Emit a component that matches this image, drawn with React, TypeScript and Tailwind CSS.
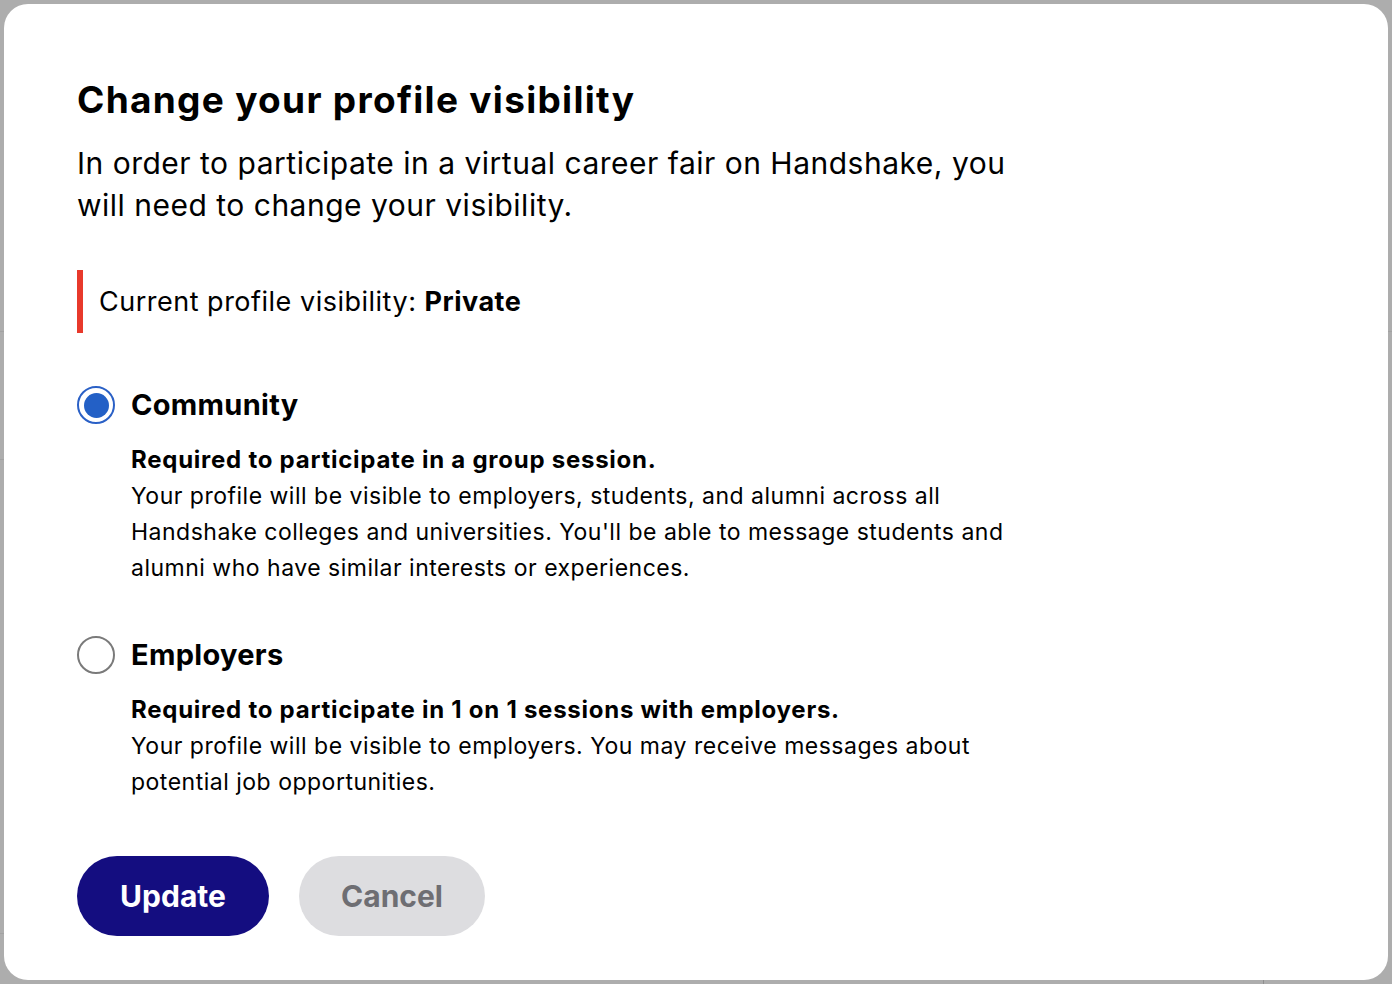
import React, { useState } from "react";

type Option = {
  readonly id: "community" | "employers";
  readonly label: string;
  readonly requirement: string;
  readonly description: string;
};

const OPTIONS: Option[] = [
  {
    id: "community",
    label: "Community",
    requirement: "Required to participate in a group session.",
    description:
      "Your profile will be visible to employers, students, and alumni across all Handshake colleges and universities. You'll be able to message students and alumni who have similar interests or experiences.",
  },
  {
    id: "employers",
    label: "Employers",
    requirement: "Required to participate in 1 on 1 sessions with employers.",
    description:
      "Your profile will be visible to employers. You may receive messages about potential job opportunities.",
  },
];

function Radio({ checked }: { readonly checked: boolean }) {
  return (
    <span
      className={
        checked
          ? "flex size-[38px] shrink-0 items-center justify-center rounded-full border-[2.5px] border-[#2a60c6]"
          : "flex size-[38px] shrink-0 items-center justify-center rounded-full border-2 border-[#7a7a7a]"
      }
    >
      {checked ? <span className="size-[25px] rounded-full bg-[#2360c6]" /> : null}
    </span>
  );
}

export default function App() {
  const [selected, setSelected] = useState<Option["id"]>("community");

  return (
    <div
      className="relative h-[984px] w-full overflow-hidden bg-[#adadad] p-1 text-black"
      style={{ fontFamily: "Inter, 'Noto Sans', sans-serif" }}
    >
      {/* page behind the backdrop */}
      <div className="absolute inset-x-0 top-[331px] h-px bg-[#a2a2a2]" />
      <div className="absolute left-0 top-[459px] h-px w-1 bg-[#a2a2a2]" />
      <div className="absolute left-0 top-[933px] h-px w-1 bg-[#a2a2a2]" />
      <div className="absolute bottom-0 left-[1263px] h-1 w-px bg-[#8f8f8f]" />

      <div className="relative flex h-full flex-col rounded-[24px] bg-white px-[73px] pt-[74px]">
        <div className="w-[950px]">
          <h1 className="text-[37px] font-bold leading-[44px] tracking-[1.3px]">
            Change your profile visibility
          </h1>
          <p className="mt-5 text-[30px] leading-[42px] tracking-[0.5px]">
            In order to participate in a virtual career fair on Handshake, you will need to change your
            visibility.
          </p>

          <div className="mt-11 flex h-[63px] items-center border-l-[6px] border-[#e8392b] pl-[16px]">
            <span className="text-[27px] leading-8 tracking-[0.5px]">
              Current profile visibility: <span className="font-bold">Private</span>
            </span>
          </div>

          <div className="mt-[53px] flex flex-col gap-[50px]">
            {OPTIONS.map((opt) => (
              <label key={opt.id} className="flex cursor-pointer flex-col" onClick={() => setSelected(opt.id)}>
                <div className="flex items-center gap-[16px]">
                  <Radio checked={selected === opt.id} />
                  <span className="text-[29px] font-bold leading-[38px] tracking-[0.3px]">{opt.label}</span>
                </div>
                <div className="mt-[18px] pl-[54px] leading-[36px]">
                  <p className="text-[24px] font-bold tracking-[0.75px]">{opt.requirement}</p>
                  <p className="text-[23px] tracking-[0.5px]">{opt.description}</p>
                </div>
              </label>
            ))}
          </div>

          <div className="mt-[56px] flex gap-[30px]">
            <button
              type="button"
              className="h-20 w-[192px] rounded-full bg-[#140d80] text-[30px] font-bold text-white"
            >
              Update
            </button>
            <button
              type="button"
              className="h-20 w-[186px] rounded-full bg-[#dddde0] text-[30px] font-bold text-[#6e6e73]"
            >
              Cancel
            </button>
          </div>
        </div>
      </div>
    </div>
  );
}
